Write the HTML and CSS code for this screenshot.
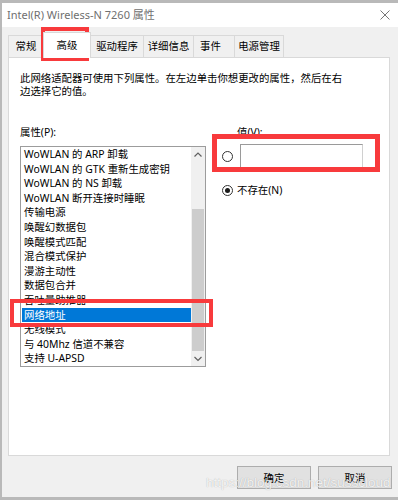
FILE: index.html
```html
<!DOCTYPE html>
<html lang="zh-CN">
<head>
<meta charset="utf-8">
<title>Intel(R) Wireless-N 7260 属性</title>
<link rel="stylesheet" href="styles.css">
</head>
<body>
<div class="window">
  <div class="titlebar">
    <span class="title">Intel(R) Wireless-N 7260 属性</span>
    <svg class="close" width="10" height="10" viewBox="0 0 10 10"><path d="M0.5 0.5 L9.5 9.5 M9.5 0.5 L0.5 9.5" stroke="#767676" stroke-width="1" fill="none"/></svg>
  </div>
  <div class="content">
    <div class="tabs">
      <div class="tab tab-general">常规</div>
      <div class="tab tab-active tab-adv">高级</div>
      <div class="tab tab-driver">驱动程序</div>
      <div class="tab tab-detail">详细信息</div>
      <div class="tab tab-event">事件</div>
      <div class="tab tab-power">电源管理</div>
    </div>
    <div class="panel">
      <p class="desc">此网络适配器可使用下列属性。在左边单击你想更改的属性，然后在右边选择它的值。</p>
      <div class="props">
        <div class="left-col">
          <div class="label">属性(P):</div>
          <div class="listbox">
            <div class="items">
              <div class="item">WoWLAN 的 ARP 卸载</div>
              <div class="item">WoWLAN 的 GTK 重新生成密钥</div>
              <div class="item">WoWLAN 的 NS 卸载</div>
              <div class="item">WoWLAN 断开连接时睡眠</div>
              <div class="item">传输电源</div>
              <div class="item">唤醒幻数据包</div>
              <div class="item">唤醒模式匹配</div>
              <div class="item">混合模式保护</div>
              <div class="item">漫游主动性</div>
              <div class="item">数据包合并</div>
              <div class="item">吞吐量助推器</div>
              <div class="item item-selected">网络地址</div>
              <div class="item">无线模式</div>
              <div class="item">与 40Mhz 信道不兼容</div>
              <div class="item">支持 U-APSD</div>
            </div>
            <div class="scrollbar">
              <div class="sb-btn"><svg width="14" height="15" viewBox="0 0 14 15"><polyline points="3.5,9.5 7,6 10.5,9.5" fill="none" stroke="#606060" stroke-width="1.2"/></svg></div>
              <div class="sb-track"><div class="sb-thumb"></div></div>
              <div class="sb-btn"><svg width="14" height="15" viewBox="0 0 14 15"><polyline points="3.5,6 7,9.5 10.5,6" fill="none" stroke="#606060" stroke-width="1.2"/></svg></div>
            </div>
          </div>
        </div>
        <div class="right-col">
          <div class="label value-label">值(V):</div>
          <div class="radio-row row-value">
            <span class="radio"></span>
            <div class="textbox"></div>
          </div>
          <div class="radio-row row-none">
            <span class="radio radio-checked"></span>
            <span class="radio-text">不存在(N)</span>
          </div>
        </div>
      </div>
    </div>
    <div class="buttons">
      <button class="btn">确定</button>
      <button class="btn">取消</button>
    </div>
  </div>
  <div class="hl hl-tab"></div>
  <div class="hl hl-value"></div>
  <div class="hl hl-item"></div>
  <div class="watermark">https://blog.csdn.net/susscloud</div>
</div>
</body>
</html>
```
FILE: styles.css
```css
html, body {
  margin: 0;
  padding: 0;
}
body {
  background: #b9b9b9;
  width: 398px;
  height: 500px;
  overflow: hidden;
  font-family: "Noto Sans", "Open Sans", "Noto Sans CJK SC", sans-serif;
  font-size: 10.4px;
  color: #000;
}
.window {
  position: relative;
  margin: 3px 0 0 2px;
  width: 396px;
  height: 494px;
  background: #f0f0f0;
  box-sizing: border-box;
}
.titlebar {
  height: 24px;
  background: #fff;
  display: flex;
  align-items: center;
  padding: 0 8px 1px 5px;
  box-sizing: border-box;
}
.title {
  font-size: 11px;
  color: #6f6f6f;
  line-height: 14px;
}
.close {
  margin-left: auto;
  display: block;
}
.content {
  padding: 5px 8px 0 6px;
}
.tabs {
  display: flex;
  align-items: flex-start;
  height: 25px;
}
.tab {
  box-sizing: border-box;
  height: 22px;
  margin-top: 3px;
  border: 1px solid #d9d9d9;
  border-bottom: none;
  margin-left: -1px;
  background: #f0f0f0;
  text-align: center;
  line-height: 20px;
  white-space: nowrap;
}
.tab-general { width: 36px; margin-left: 0; }
.tab-adv { width: 48px; }
.tab-driver { width: 54px; }
.tab-detail { width: 51px; }
.tab-event { width: 42px; text-align: left; padding-left: 6px; }
.tab-power { width: 50px; }
.tab-active {
  position: relative;
  z-index: 2;
  height: 26px;
  margin-top: 0;
  background: #fff;
  line-height: 24px;
}
.panel {
  box-sizing: border-box;
  height: 399px;
  background: #fff;
  border: 1px solid #d9d9d9;
  padding: 14px 0 0 11px;
}
.desc {
  margin: 0;
  width: 328px;
  line-height: 12.5px;
}
.props {
  display: flex;
  margin-top: 29px;
}
.left-col {
  width: 186px;
}
.label {
  line-height: 13px;
  height: 13px;
  white-space: nowrap;
}
.listbox {
  margin-top: 7px;
  box-sizing: border-box;
  height: 221px;
  border: 1px solid #9c9c9c;
  display: flex;
}
.items {
  flex: 1;
  padding-left: 1px;
  overflow: hidden;
}
.item {
  height: 14.6px;
  line-height: 14.6px;
  padding-left: 2px;
  white-space: nowrap;
  overflow: hidden;
}
.item-selected {
  background: #0078d7;
  color: #fff;
}
.scrollbar {
  width: 14px;
  background: #f0f0f0;
  display: flex;
  flex-direction: column;
}
.sb-btn {
  height: 15px;
}
.sb-btn svg {
  display: block;
}
.sb-track {
  flex: 1;
  display: flex;
  flex-direction: column;
  justify-content: flex-end;
}
.sb-thumb {
  height: 142px;
  margin: 0 1px;
  background: #cdcdcd;
}
.right-col {
  margin-left: 16px;
}
.value-label {
  padding-left: 15px;
}
.radio-row {
  display: flex;
  align-items: center;
}
.row-value {
  margin-top: 5px;
  height: 25px;
}
.row-none {
  margin-top: 14.5px;
  line-height: 13px;
}
.radio {
  box-sizing: border-box;
  width: 11px;
  height: 11px;
  border: 1px solid #333;
  border-radius: 50%;
  background: #fff;
  display: flex;
  align-items: center;
  justify-content: center;
  flex: none;
}
.radio-checked::after {
  content: "";
  width: 5px;
  height: 5px;
  border-radius: 50%;
  background: #1a1a1a;
}
.textbox {
  box-sizing: border-box;
  margin-left: 7px;
  width: 123px;
  height: 25px;
  border: 1px solid #9a9a9a;
  border-right-color: #d0d0d0;
  background: #fff;
}
.radio-text {
  margin-left: 4px;
}
.buttons {
  display: flex;
  justify-content: flex-end;
  gap: 7px;
  margin-top: 10px;
  margin-right: -2px;
}
.btn {
  width: 74px;
  height: 23px;
  padding: 0;
  box-sizing: border-box;
  background: #e1e1e1;
  border: 1px solid #adadad;
  font: inherit;
  color: #000;
}
.hl {
  position: absolute;
  box-sizing: border-box;
  border-style: solid;
  border-color: #f83a3c;
  pointer-events: none;
}
.hl-tab {
  left: 39px;
  top: 24px;
  width: 48px;
  height: 34px;
  border-width: 4px;
}
.hl-value {
  left: 210px;
  top: 131px;
  width: 168px;
  height: 38px;
  border-width: 5px;
}
.hl-item {
  left: 8px;
  top: 296px;
  width: 203px;
  height: 28px;
  border-width: 4px;
}
.watermark {
  position: absolute;
  left: 204px;
  top: 473px;
  font-family: "Liberation Sans", Arial, sans-serif;
  font-size: 13.5px;
  line-height: 14px;
  color: rgba(255, 255, 255, 0.85);
  text-shadow: 0 0 1px rgba(0, 0, 0, 0.3);
  white-space: nowrap;
  pointer-events: none;
}
```
